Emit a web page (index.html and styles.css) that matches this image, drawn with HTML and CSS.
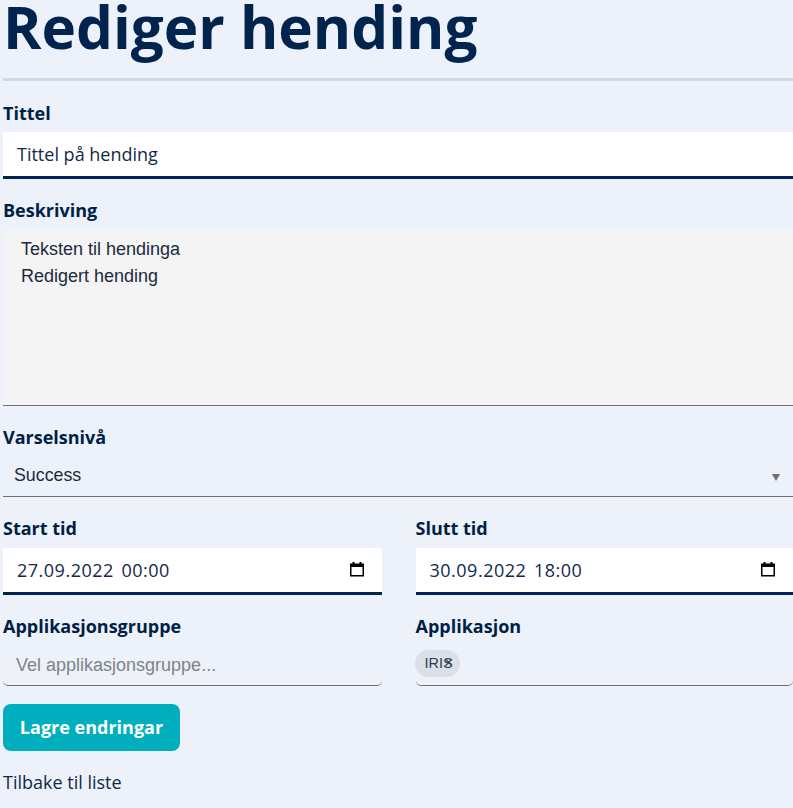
FILE: index.html
```html
<!DOCTYPE html>
<html lang="nn">
<head>
<meta charset="utf-8">
<title>Rediger hending</title>
<link rel="stylesheet" href="styles.css">
</head>
<body>
<main class="page">
  <h1 class="title">Rediger hending</h1>
  <form class="form">
    <div class="field field-tittel">
      <label class="label">Tittel</label>
      <div class="input">Tittel på hending</div>
    </div>
    <div class="field field-besk">
      <label class="label">Beskriving</label>
      <div class="textarea"><div>Teksten til hendinga</div><div>Redigert hending</div></div>
    </div>
    <div class="field field-varsel">
      <label class="label">Varselsnivå</label>
      <div class="select"><span>Success</span><span class="arrow"></span></div>
    </div>
    <div class="grid">
      <div class="field">
        <label class="label">Start tid</label>
        <div class="input date"><span>27.09.2022 00:00</span>
          <svg class="cal" viewBox="0 0 16 16" width="16" height="16"><path d="M3.500 1h2v1.500h5V1h2v1.500H15V15.500H1V2.500h2.500z M2.500 6v8h11V6z" fill="#000" fill-rule="evenodd"/></svg>
        </div>
      </div>
      <div class="field">
        <label class="label">Slutt tid</label>
        <div class="input date"><span>30.09.2022 18:00</span>
          <svg class="cal" viewBox="0 0 16 16" width="16" height="16"><path d="M3.500 1h2v1.500h5V1h2v1.500H15V15.500H1V2.500h2.500z M2.500 6v8h11V6z" fill="#000" fill-rule="evenodd"/></svg>
        </div>
      </div>
      <div class="field">
        <label class="label">Applikasjonsgruppe</label>
        <div class="multi multi-empty"><span class="placeholder">Vel applikasjonsgruppe...</span></div>
      </div>
      <div class="field">
        <label class="label">Applikasjon</label>
        <div class="multi"><span class="chip"><span>IRIS</span><span class="chip-x">×</span></span></div>
      </div>
    </div>
    <button class="button" type="button">Lagre endringar</button>
    <a class="back">Tilbake til liste</a>
  </form>
</main>
</body>
</html>
```
FILE: styles.css
```css
html, body {
  margin: 0;
  padding: 0;
  background: #edf1f9;
}
body {
  color: #00244e;
  font-family: "Open Sans", sans-serif;
  overflow: hidden;
}
.page {
  padding-left: 3px;
  height: 808px;
  box-sizing: border-box;
}
.title {
  margin: 0;
  height: 78px;
  border-bottom: 3px solid #d4d8e3;
  font-size: 58.400px;
  line-height: 54px;
  font-weight: 700;
  color: #00244e;
}
.form {
  display: flex;
  flex-direction: column;
}
.field {
  display: flex;
  flex-direction: column;
}
.label {
  font-size: 18px;
  font-weight: 700;
  line-height: 25px;
  height: 25px;
  color: #001f45;
}
.field-tittel { padding-top: 20px; }
.field-tittel .label { height: 31px; }
.input {
  height: 44px;
  background: #fff;
  border-bottom: 3px solid #00244e;
  padding-left: 14px;
  font-size: 18px;
  line-height: 45px;
  color: #12294a;
}
.field-besk { padding-top: 19px; }
.field-besk .label { height: 32px; }
.textarea {
  height: 176px;
  background: #f4f4f4;
  border-bottom: 1px solid #6f6f74;
  padding-left: 18px;
  padding-top: 6px;
  box-sizing: border-box;
  font-family: "Liberation Sans", sans-serif;
  font-size: 18px;
  line-height: 27px;
  color: #1c2a3f;
}
.field-varsel { padding-top: 19px; }
.select {
  display: flex;
  justify-content: space-between;
  align-items: center;
  height: 41px;
  margin-top: 3px;
  padding: 2px 13px 0 11px;
  border-bottom: 1px solid #6f6f74;
  font-family: "Liberation Sans", sans-serif;
  font-size: 17.800px;
  color: #1c2a3f;
}
.arrow {
  width: 0;
  height: 0;
  border-left: 4px solid transparent;
  border-right: 4px solid transparent;
  border-top: 7px solid #6f6f74;
  margin-top: 3px;
}
.grid {
  display: grid;
  grid-template-columns: 379px 1fr;
  column-gap: 33.500px;
  padding-top: 19px;
}
.grid .label { height: 31px; }
.grid .field:nth-child(-n+2) .label { height: 32px; }
.grid .field:nth-child(n+3) { padding-top: 19px; }
.date {
  display: flex;
  justify-content: space-between;
  align-items: center;
  padding-right: 17px;
  line-height: 42px;
  letter-spacing: 0.500px;
  word-spacing: 2.500px;
}
.cal {
  display: block;
  margin-bottom: 3px;
}
.multi {
  height: 45px;
  margin-top: -4px;
  border-bottom: 1px solid #6f6f74;
  border-radius: 0 0 5px 5px;
  box-sizing: border-box;
  display: flex;
  align-items: center;
  font-family: "Liberation Sans", sans-serif;
  font-size: 18px;
}
.multi-empty { padding-top: 4px; }
.placeholder {
  padding-left: 13px;
  color: #808387;
}
.chip {
  position: relative;
  display: flex;
  align-items: center;
  width: 45px;
  height: 27px;
  margin-left: -0.500px;
  padding-left: 9.500px;
  box-sizing: border-box;
  border-radius: 14px;
  background: #dbdfe8;
  font-size: 14.400px;
  color: #2b3c55;
}
.chip-x {
  position: absolute;
  left: 29px;
  top: 3px;
  font-size: 16px;
  line-height: 20px;
  color: #3a3f48;
}
.button {
  align-self: flex-start;
  width: 177px;
  height: 47px;
  margin-top: 18px;
  border: 0;
  border-radius: 8px;
  background: #00aebd;
  color: #fff;
  font-family: "Open Sans", sans-serif;
  font-size: 18px;
  font-weight: 700;
  padding: 0 0 2px;
}
.back {
  margin-top: 19px;
  font-size: 18px;
  line-height: 24px;
  color: #12294a;
}
```
